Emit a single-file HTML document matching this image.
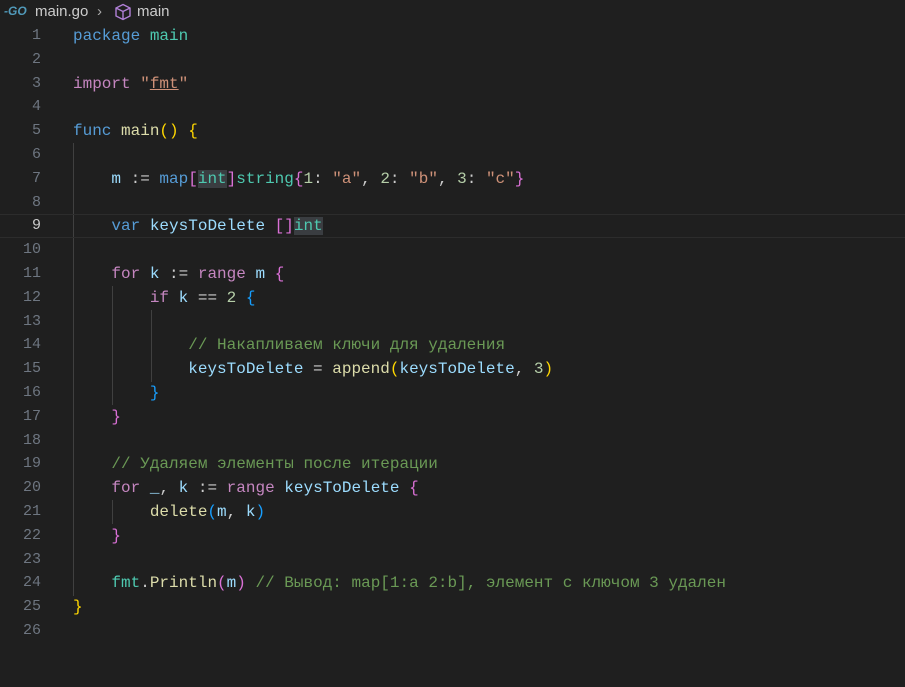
<!DOCTYPE html>
<html><head><meta charset="utf-8"><style>
body{margin:0;width:905px;height:687px;background:#1f1f1f;overflow:hidden;font-family:"Liberation Mono","DejaVu Sans Mono",monospace;position:relative}
.bc{position:absolute;top:0;left:0;height:24px;width:300px;font-family:"Liberation Sans",sans-serif;font-size:15px;color:#cccccc;}
.bc span{position:absolute;top:3px;white-space:nowrap}
.r{position:absolute;left:0;width:905px;height:24px;line-height:24px;}
.ln{position:absolute;left:0;top:0;width:41px;text-align:right;color:#6e7681;font-size:15px;}
.cl{position:absolute;left:73px;top:0;font-size:16px;color:#cccccc;white-space:pre;}
.k{color:#569cd6}.c{color:#c586c0}.v{color:#9cdcfe}.f{color:#dcdcaa}.t{color:#4ec9b0}.s{color:#ce9178}.n{color:#b5cea8}.m{color:#6a9955}
.g{color:#ffd700}.o{color:#da70d6}.b{color:#179fff}
.hl{background:#3a3d41}
.guide{position:absolute;width:1px;background:#404040}
</style></head><body>
<div class="bc">
<span style="left:4px;top:4px;color:#519aba;font-weight:bold;font-style:italic;font-size:12px">-GO</span>
<span style="left:35px">main.go</span>
<span style="left:97px;color:#aaa">›</span>
<svg style="position:absolute;left:114px;top:3px" width="18" height="18" viewBox="0 0 18 18" fill="none" stroke="#b180d7" stroke-width="1.4"><path d="M9 1.5 L16 5 V13 L9 16.5 L2 13 V5 Z M2 5 L9 8.5 L16 5 M9 8.5 V16.5"/></svg>
<span style="left:137px">main</span>
</div>
<div class="guide" style="left:73px;top:143px;height:453px"></div>
<div class="guide" style="left:112px;top:286px;height:119px"></div>
<div class="guide" style="left:112px;top:500px;height:24px"></div>
<div class="guide" style="left:151px;top:310px;height:72px"></div>
<div class="r" style="top:214px;height:22px;border-top:1px solid #2c2c2c;border-bottom:1px solid #2c2c2c"></div>

<div class="r" style="top:24px"><div class="ln">1</div><div class="cl"><span class="k">package</span> <span class="t">main</span></div></div>
<div class="r" style="top:48px"><div class="ln">2</div></div>
<div class="r" style="top:72px"><div class="ln">3</div><div class="cl"><span class="c">import</span> <span class="s">"<u style="text-decoration-color:#ce9178">fmt</u>"</span></div></div>
<div class="r" style="top:95px"><div class="ln">4</div></div>
<div class="r" style="top:119px"><div class="ln">5</div><div class="cl"><span class="k">func</span> <span class="f">main</span><span class="g">()</span> <span class="g">{</span></div></div>
<div class="r" style="top:143px"><div class="ln">6</div></div>
<div class="r" style="top:167px"><div class="ln">7</div><div class="cl">    <span class="v">m</span> := <span class="k">map</span><span class="o">[</span><span class="t hl">int</span><span class="o">]</span><span class="t">string</span><span class="o">{</span><span class="n">1</span>: <span class="s">"a"</span>, <span class="n">2</span>: <span class="s">"b"</span>, <span class="n">3</span>: <span class="s">"c"</span><span class="o">}</span></div></div>
<div class="r" style="top:191px"><div class="ln">8</div></div>
<div class="r" style="top:214px"><div class="ln" style="color:#cccccc">9</div><div class="cl">    <span class="k">var</span> <span class="v">keysToDelete</span> <span class="o">[]</span><span class="t hl">int</span></div></div>
<div class="r" style="top:238px"><div class="ln">10</div></div>
<div class="r" style="top:262px"><div class="ln">11</div><div class="cl">    <span class="c">for</span> <span class="v">k</span> := <span class="c">range</span> <span class="v">m</span> <span class="o">{</span></div></div>
<div class="r" style="top:286px"><div class="ln">12</div><div class="cl">        <span class="c">if</span> <span class="v">k</span> == <span class="n">2</span> <span class="b">{</span></div></div>
<div class="r" style="top:310px"><div class="ln">13</div></div>
<div class="r" style="top:333px"><div class="ln">14</div><div class="cl">            <span class="m">// Накапливаем ключи для удаления</span></div></div>
<div class="r" style="top:357px"><div class="ln">15</div><div class="cl">            <span class="v">keysToDelete</span> = <span class="f">append</span><span class="g">(</span><span class="v">keysToDelete</span>, <span class="n">3</span><span class="g">)</span></div></div>
<div class="r" style="top:381px"><div class="ln">16</div><div class="cl">        <span class="b">}</span></div></div>
<div class="r" style="top:405px"><div class="ln">17</div><div class="cl">    <span class="o">}</span></div></div>
<div class="r" style="top:429px"><div class="ln">18</div></div>
<div class="r" style="top:452px"><div class="ln">19</div><div class="cl">    <span class="m">// Удаляем элементы после итерации</span></div></div>
<div class="r" style="top:476px"><div class="ln">20</div><div class="cl">    <span class="c">for</span> <span class="v">_</span>, <span class="v">k</span> := <span class="c">range</span> <span class="v">keysToDelete</span> <span class="o">{</span></div></div>
<div class="r" style="top:500px"><div class="ln">21</div><div class="cl">        <span class="f">delete</span><span class="b">(</span><span class="v">m</span>, <span class="v">k</span><span class="b">)</span></div></div>
<div class="r" style="top:524px"><div class="ln">22</div><div class="cl">    <span class="o">}</span></div></div>
<div class="r" style="top:548px"><div class="ln">23</div></div>
<div class="r" style="top:571px"><div class="ln">24</div><div class="cl">    <span class="t">fmt</span>.<span class="f">Println</span><span class="o">(</span><span class="v">m</span><span class="o">)</span> <span class="m">// Вывод: map[1:a 2:b], элемент с ключом 3 удален</span></div></div>
<div class="r" style="top:595px"><div class="ln">25</div><div class="cl"><span class="g">}</span></div></div>
<div class="r" style="top:619px"><div class="ln">26</div></div>
</body></html>
